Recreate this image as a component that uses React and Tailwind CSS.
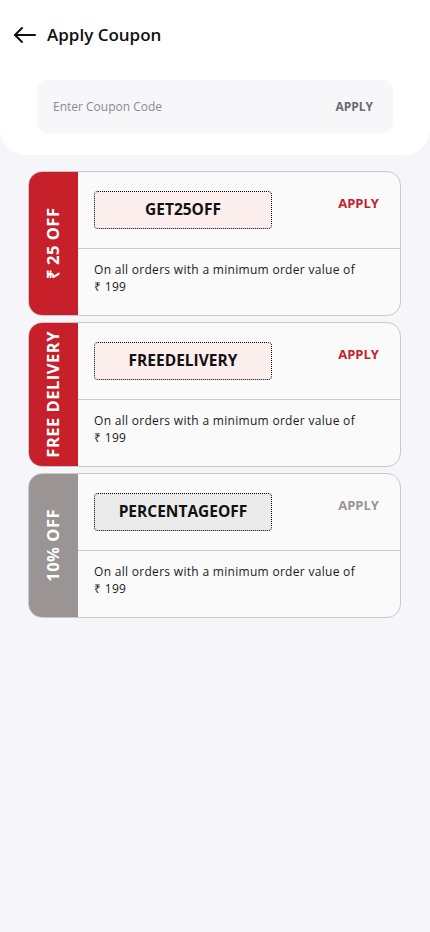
import React from "react";

const coupons = [
  {
    label: "₹ 25 OFF",
    code: "GET25OFF",
    active: true,
  },
  {
    label: "FREE DELIVERY",
    code: "FREEDELIVERY",
    active: true,
  },
  {
    label: "10% OFF",
    code: "PERCENTAGEOFF",
    active: false,
  },
];

const BackArrow = () => (
  <svg width="24" height="24" viewBox="0 0 24 24" fill="none" stroke="#111" strokeWidth="2" strokeLinecap="round" strokeLinejoin="round">
    <path d="M22 12H2" />
    <path d="M9 5l-7 7 7 7" />
  </svg>
);

const CouponCard = ({ coupon }) => (
  <div className="flex h-[145px] rounded-[14px] border border-[#c9c9cc] bg-[#fafafa] overflow-hidden">
    <div
      className={`w-[49px] shrink-0 flex items-center justify-center ${
        coupon.active ? "bg-[#c8202b]" : "bg-[#9a9594]"
      }`}
    >
      <span className="-rotate-90 whitespace-nowrap text-white text-[16.5px] font-bold tracking-[0.5px]">
        {coupon.label}
      </span>
    </div>
    <div className="flex-1 flex flex-col">
      <div className="h-[77px] flex items-start justify-between pl-[16px] pr-[21px] pt-[19px] border-b border-[#c9c9cc]">
        <div
          className={`w-[178px] h-[38px] flex items-center justify-center rounded-[4px] border border-dotted border-black text-[15.5px] font-bold text-[#111] ${
            coupon.active ? "bg-[#fdeeee]" : "bg-[#ebebeb]"
          }`}
        >
          {coupon.code}
        </div>
        <span
          className={`mt-[3px] text-[13px] font-bold ${
            coupon.active ? "text-[#c8202b]" : "text-[#9a9594]"
          }`}
        >
          APPLY
        </span>
      </div>
      <div className="pl-[16px] pr-4 pt-[12px] text-[12px] leading-[17px] tracking-[0.3px] text-[#1a1a1a]">
        <p>On all orders with a minimum order value of</p>
        <p>₹ 199</p>
      </div>
    </div>
  </div>
);

export default function App() {
  return (
    <div className="min-h-[932px] bg-[#f5f5fa] font-['Open_Sans',sans-serif]">
      <div className="bg-white rounded-b-[26px] pb-[22px]">
        <div className="flex items-center gap-[10px] pl-[13px] pt-[23px] h-[47px]">
          <BackArrow />
          <h1 className="text-[17px] font-semibold text-[#111]">Apply Coupon</h1>
        </div>
        <div className="mx-[37px] mt-[33px] h-[53px] rounded-[10px] bg-[#f7f7f9] flex items-center justify-between pl-[16px] pr-[20px]">
          <span className="text-[12px] text-[#8a8a8f]">Enter Coupon Code</span>
          <span className="text-[12px] font-bold text-[#6b6b70]">APPLY</span>
        </div>
      </div>
      <div className="flex flex-col gap-[6px] ml-[28px] mr-[29px] mt-[16px]">
        {coupons.map((c) => (
          <CouponCard key={c.code} coupon={c} />
        ))}
      </div>
    </div>
  );
}
